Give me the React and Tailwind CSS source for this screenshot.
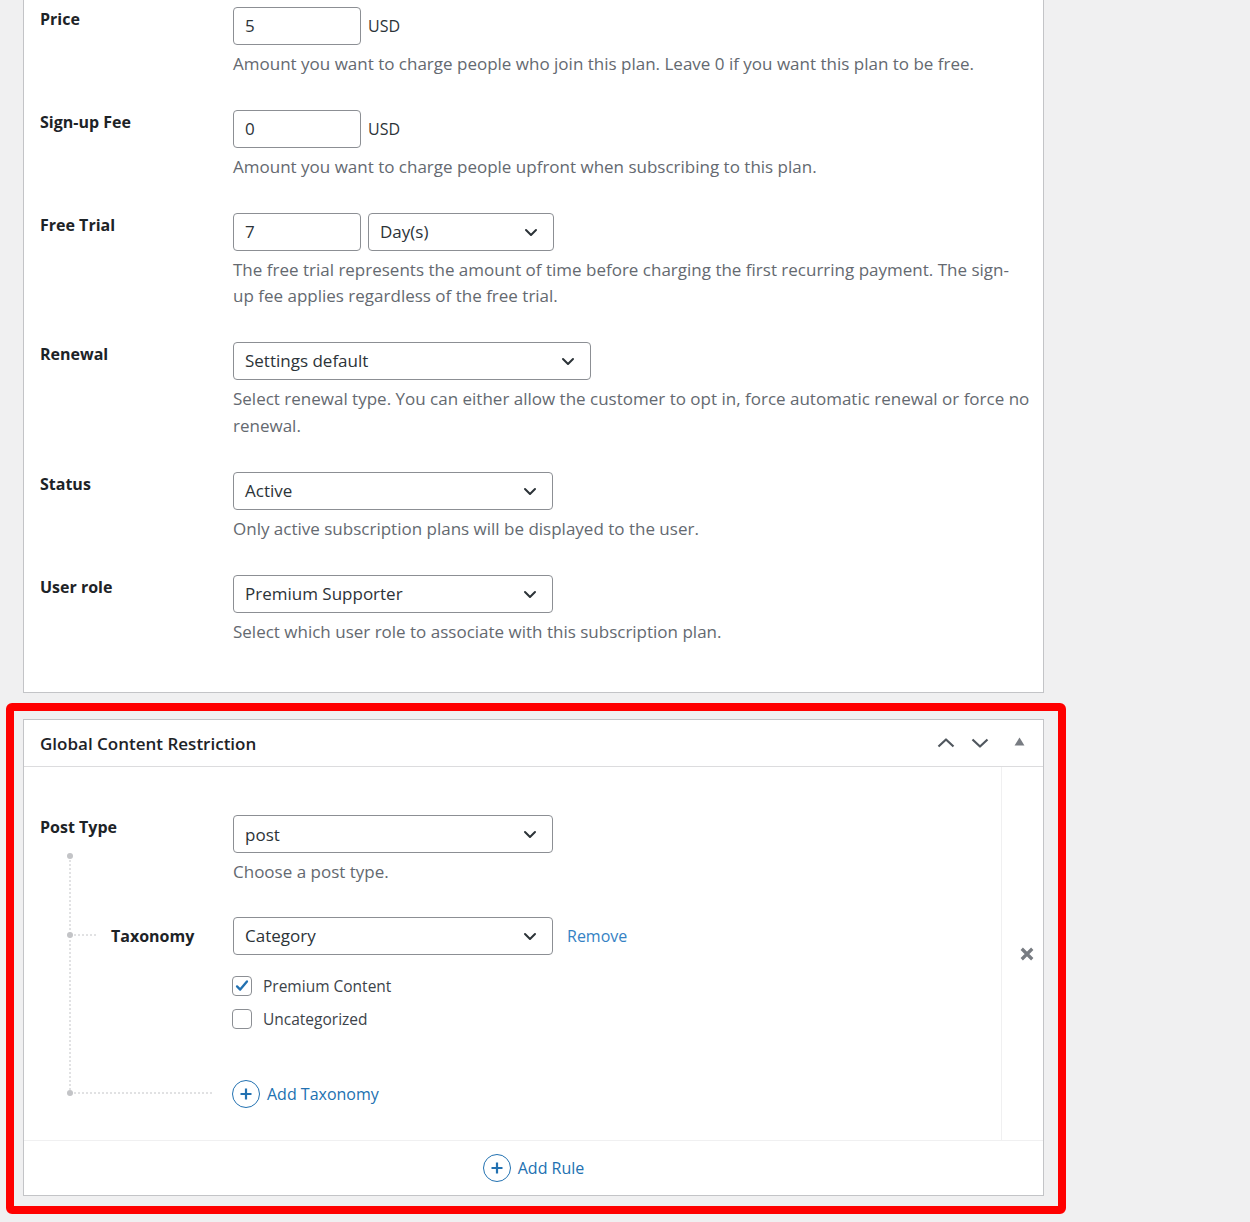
import React from "react";

const font = { fontFamily: '"Open Sans", "Noto Sans", sans-serif' };

function Chevron() {
  return (
    <svg viewBox="0 0 16 16" className="w-[16px] h-[16px] text-[#2c3338]" fill="none" stroke="currentColor" strokeWidth="2" strokeLinecap="round" strokeLinejoin="round">
      <path d="M3 6l5 5 5-5" />
    </svg>
  );
}

function Select({ value, w }) {
  return (
    <div className={`${w} h-[38px] border border-[#8c8f94] rounded-[4px] flex items-center justify-between pl-[11px] pr-[14px] text-[17px] text-[#2c3338] bg-white`}>
      <span>{value}</span>
      <Chevron />
    </div>
  );
}

function Input({ value }) {
  return (
    <div className="w-[128px] h-[38px] border border-[#8c8f94] rounded-[4px] flex items-center pl-[11px] text-[17px] text-[#2c3338] bg-white">
      {value}
    </div>
  );
}

function Row({ label, children, desc, className = "py-4" }) {
  return (
    <div className={`flex ${className}`}>
      <div className="w-[193px] shrink-0 text-[16px] leading-[24px] font-bold text-[#1d2327]">{label}</div>
      <div className="w-[802px]">
        {children}
        {desc && <p className="mt-[6px] text-[17px] leading-[26.8px] text-[#646970]">{desc}</p>}
      </div>
    </div>
  );
}

function PlusCircle() {
  return (
    <span className="w-[28px] h-[28px] rounded-full border border-[#2271b1] flex items-center justify-center">
      <svg viewBox="0 0 12 12" className="w-[12px] h-[12px]" stroke="#2271b1" strokeWidth="2.2">
        <path d="M6 0.5v11M0.5 6h11" />
      </svg>
    </span>
  );
}

function Checkbox({ checked, label }) {
  return (
    <div className="flex items-center gap-[11px]">
      <span className="w-[20px] h-[20px] border border-[#8c8f94] rounded-[4px] flex items-center justify-center bg-white">
        {checked && (
          <svg viewBox="0 0 20 20" className="w-[18px] h-[18px]" fill="none" stroke="#2271b1" strokeWidth="2.6" strokeLinecap="round" strokeLinejoin="round">
            <path d="M4.5 10.5l3.5 3.5 7.5-9" />
          </svg>
        )}
      </span>
      <span className="text-[15.5px] leading-[20px] text-[#3c434a]">{label}</span>
    </div>
  );
}

export default function App() {
  return (
    <div className="w-[1250px] h-[1222px] bg-[#f0f0f1] overflow-hidden" style={font}>
      {/* Top panel */}
      <div className="ml-[23px] w-[1021px] bg-white border-x border-b border-[#c3c4c7] pl-[16px] pb-[31px]">
        <Row label="Price" className="pt-[7px] pb-4" desc="Amount you want to charge people who join this plan. Leave 0 if you want this plan to be free.">
          <div className="flex items-center gap-[7px]">
            <Input value="5" />
            <span className="text-[16px] text-[#2c3338]">USD</span>
          </div>
        </Row>
        <Row label="Sign-up Fee" desc="Amount you want to charge people upfront when subscribing to this plan.">
          <div className="flex items-center gap-[7px]">
            <Input value="0" />
            <span className="text-[16px] text-[#2c3338]">USD</span>
          </div>
        </Row>
        <Row
          label="Free Trial"
          desc={
            <>
              The free trial represents the amount of time before charging the first recurring payment. The sign-
              <br />
              up fee applies regardless of the free trial.
            </>
          }
        >
          <div className="flex items-center gap-[7px]">
            <Input value="7" />
            <Select value="Day(s)" w="w-[186px]" />
          </div>
        </Row>
        <Row label="Renewal" desc="Select renewal type. You can either allow the customer to opt in, force automatic renewal or force no renewal.">
          <Select value="Settings default" w="w-[358px]" />
        </Row>
        <Row label="Status" desc="Only active subscription plans will be displayed to the user.">
          <Select value="Active" w="w-[320px]" />
        </Row>
        <Row label="User role" desc="Select which user role to associate with this subscription plan.">
          <Select value="Premium Supporter" w="w-[320px]" />
        </Row>
      </div>

      {/* Highlighted box */}
      <div className="mt-[10px] ml-[6px] w-[1060px] border-[8px] border-[#ff0000] rounded-[6px] pl-[9px] pr-[14px] pt-[8px] pb-[10px]">
        <div className="w-[1021px] bg-white border border-[#c3c4c7]">
          {/* Header */}
          <div className="h-[47px] border-b border-[#dcdcde] flex items-center pl-[16px] pr-[18px]">
            <h2 className="text-[17px] font-semibold text-[#1d2327] flex-1">Global Content Restriction</h2>
            <div className="flex items-center text-[#50575e]">
              <svg viewBox="0 0 20 20" className="w-[20px] h-[20px]" fill="none" stroke="currentColor" strokeWidth="2.2" strokeLinejoin="round">
                <path d="M2.5 13.5L10 6.5l7.5 7" />
              </svg>
              <svg viewBox="0 0 20 20" className="w-[20px] h-[20px] ml-[14px]" fill="none" stroke="currentColor" strokeWidth="2.2" strokeLinejoin="round">
                <path d="M2.5 6.5L10 13.5l7.5-7" />
              </svg>
              <svg viewBox="0 0 12 10" className="w-[11px] h-[9px] ml-[24px] mb-[3px]" fill="#787c82">
                <path d="M6 0.5L11.5 9.5H0.5z" />
              </svg>
            </div>
          </div>

          {/* Body */}
          <div className="flex">
            <div className="relative w-[977px] pl-[16px] pt-[48px] pb-[32px]">
              <svg className="absolute left-0 top-0 w-[200px] h-[340px] pointer-events-none" viewBox="0 0 200 340">
                <line x1="46" y1="89" x2="46" y2="326" stroke="#c3c4c7" strokeWidth="1" strokeDasharray="2 2" />
                <line x1="46" y1="168" x2="73" y2="168" stroke="#c3c4c7" strokeWidth="1" strokeDasharray="2 2" />
                <line x1="46" y1="326" x2="189" y2="326" stroke="#c3c4c7" strokeWidth="1" strokeDasharray="2 2" />
                <circle cx="46" cy="89" r="3" fill="#c3c4c7" />
                <circle cx="46" cy="168" r="3" fill="#c3c4c7" />
                <circle cx="46" cy="326" r="3" fill="#c3c4c7" />
              </svg>
              <Row label="Post Type" className="" desc="Choose a post type.">
                <Select value="post" w="w-[320px]" />
              </Row>
              <div className="flex mt-[31px]">
                <div className="w-[193px] shrink-0 pl-[71px] text-[16px] leading-[38px] font-bold text-[#1d2327]">Taxonomy</div>
                <div className="flex flex-col">
                  <div className="flex items-center">
                    <Select value="Category" w="w-[320px]" />
                    <a className="ml-[14px] text-[16px] text-[#3582c4]">Remove</a>
                  </div>
                  <div className="mt-[21px] flex flex-col gap-[13px] -ml-[1px]">
                    <Checkbox checked label="Premium Content" />
                    <Checkbox label="Uncategorized" />
                  </div>
                </div>
              </div>
              <div className="mt-[51px] ml-[192px] flex items-center gap-[7px]">
                <PlusCircle />
                <span className="text-[16px] text-[#2271b1]">Add Taxonomy</span>
              </div>
            </div>
            <div className="w-[42px] border-l border-[#f0f0f1] flex items-center pl-[18px]">
              <svg viewBox="0 0 12 12" className="w-[14px] h-[14px]" stroke="#787c82" strokeWidth="2.8">
                <path d="M1.5 1.5l9 9M10.5 1.5l-9 9" />
              </svg>
            </div>
          </div>

          {/* Footer */}
          <div className="h-[55px] border-t border-[#f0f0f1] flex items-center justify-center gap-[7px]">
            <PlusCircle />
            <span className="text-[16px] text-[#2271b1]">Add Rule</span>
          </div>
        </div>
      </div>
    </div>
  );
}
